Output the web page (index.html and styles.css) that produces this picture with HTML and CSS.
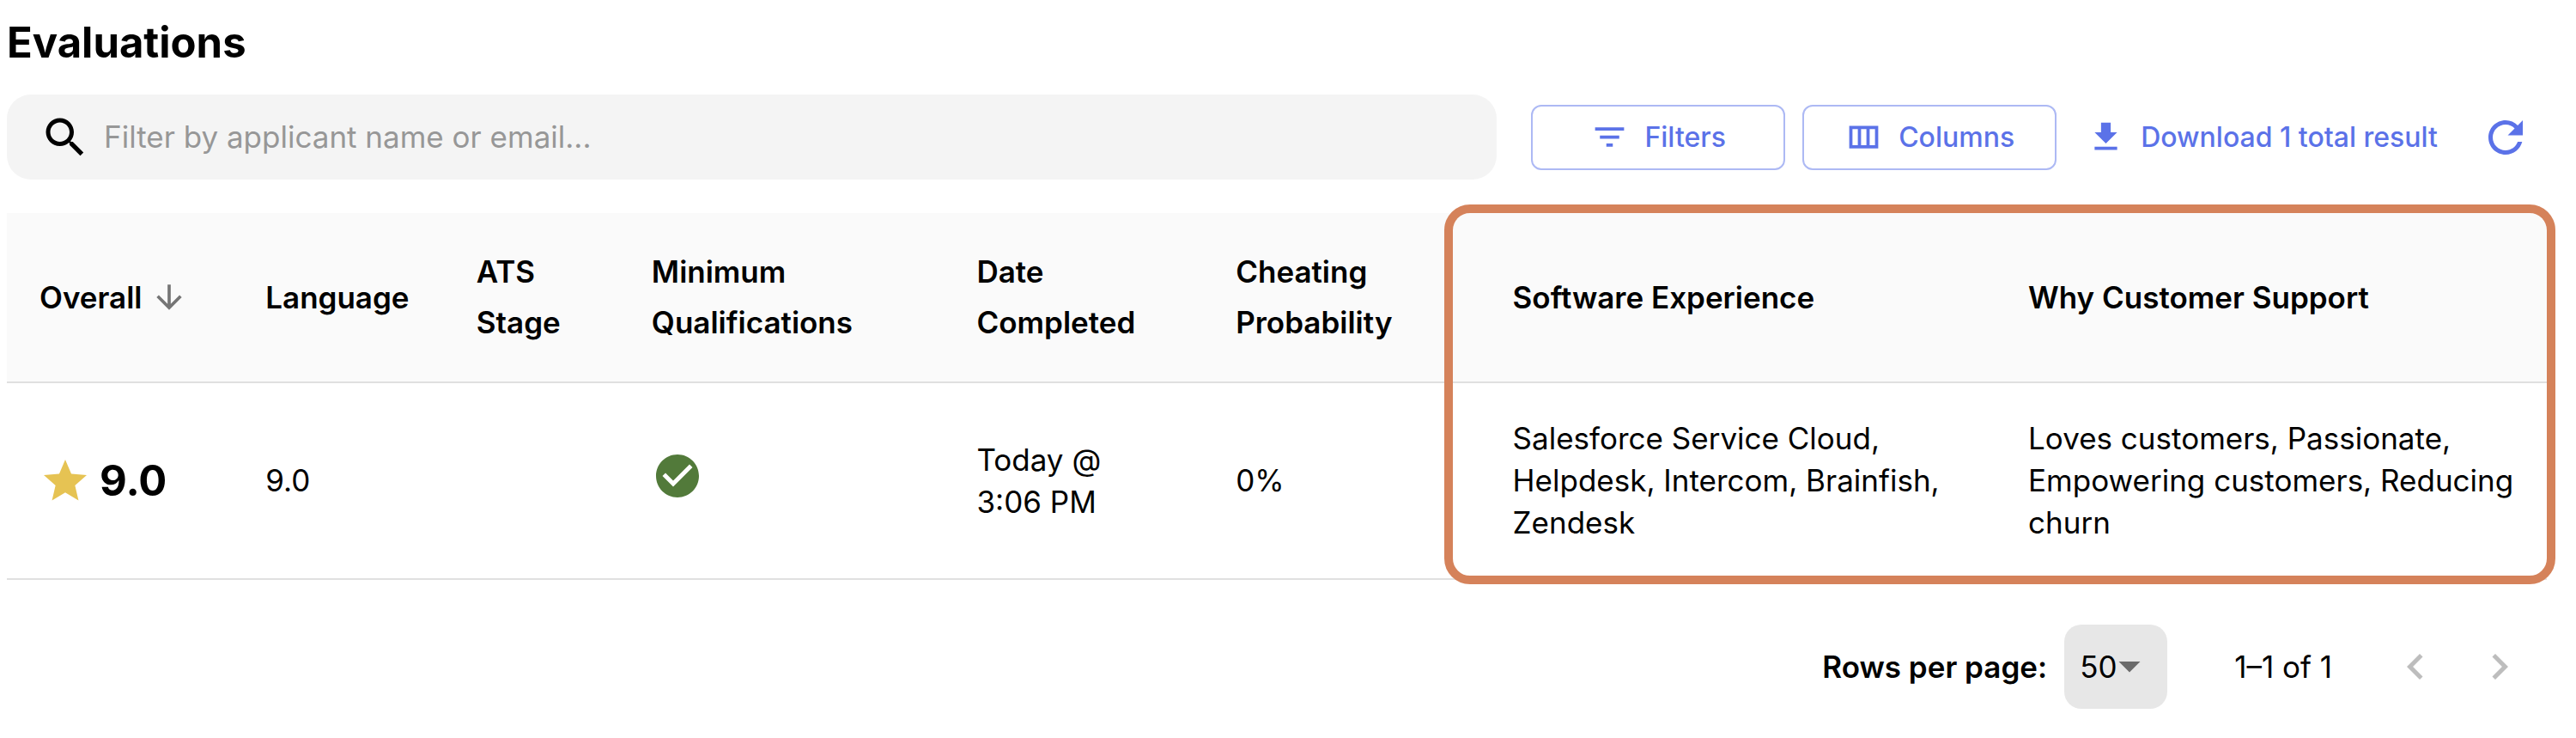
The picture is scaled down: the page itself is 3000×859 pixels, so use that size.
FILE: index.html
```html
<!DOCTYPE html>
<html lang="en">
<head>
  <meta charset="UTF-8">
  <meta name="viewport" content="width=device-width, initial-scale=1.0">
  <title>Evaluations</title>
  <link rel="stylesheet" href="styles.css">
</head>
<body>

  <main class="page">
    <h1>Evaluations</h1>

    <!-- Search and actions -->
    <div class="toolbar">
      <label class="search" for="search">
        <svg class="icon" viewBox="0 0 24 24" aria-hidden="true"><path d="M15.5 14h-.79l-.28-.27C15.41 12.59 16 11.11 16 9.5 16 5.91 13.09 3 9.5 3S3 5.91 3 9.5 5.91 16 9.5 16c1.61 0 3.09-.59 4.23-1.57l.27.28v.79l5 4.99L20.49 19l-4.99-5zm-6 0C7.01 14 5 11.99 5 9.5S7.01 5 9.5 5 14 7.01 14 9.5 11.99 14 9.5 14z"/></svg>
        <input type="text" id="search" placeholder="Filter by applicant name or email...">
      </label>

      <div class="actions">
        <button type="button" class="btn btn-outlined">
          <svg class="icon-small" viewBox="0 0 24 24" aria-hidden="true"><path d="M10 18h4v-2h-4v2zM3 6v2h18V6H3zm3 7h12v-2H6v2z"/></svg>
          Filters
        </button>
        <button type="button" class="btn btn-outlined">
          <svg class="icon-small" viewBox="0 0 24 24" aria-hidden="true"><path d="M3 5v14h18V5H3zm5.33 12H5V7h3.33v10zm5.34 0h-3.33V7h3.33v10zM19 17h-3.33V7H19v10z"/></svg>
          Columns
        </button>
        <button type="button" class="btn btn-text">
          <svg class="icon-small" viewBox="0 0 24 24" aria-hidden="true"><path d="M19 9h-4V3H9v6H5l7 7 7-7zM5 18v2h14v-2H5z"/></svg>
          Download 1 total result
        </button>
        <button type="button" class="btn-refresh" aria-label="Refresh">
          <svg class="icon" viewBox="0 0 24 24" aria-hidden="true"><path d="M17.65 6.35C16.2 4.9 14.21 4 12 4c-4.42 0-7.99 3.58-7.99 8s3.57 8 7.99 8c3.73 0 6.84-2.55 7.73-6h-2.08c-.82 2.33-3.04 4-5.65 4-3.31 0-6-2.69-6-6s2.69-6 6-6c1.66 0 3.14.69 4.22 1.78L13 11h7V4l-2.35 2.35z"/></svg>
        </button>
      </div>
    </div>

    <!-- Results table -->
    <div class="table-wrap">
      <table>
        <colgroup>
          <col class="col-overall">
          <col class="col-language">
          <col class="col-stage">
          <col class="col-qualifications">
          <col class="col-date">
          <col class="col-cheating">
          <col class="col-software">
          <col class="col-why">
        </colgroup>
        <thead>
          <tr>
            <th scope="col" aria-sort="descending">
              <button type="button" class="sort">
                Overall
                <svg class="icon-sort" viewBox="0 0 24 24" aria-hidden="true"><path d="M20 12l-1.41-1.41L13 16.17V4h-2v12.17l-5.58-5.59L4 12l8 8 8-8z"/></svg>
              </button>
            </th>
            <th scope="col">Language</th>
            <th scope="col">ATS<br>Stage</th>
            <th scope="col">Minimum<br>Qualifications</th>
            <th scope="col">Date<br>Completed</th>
            <th scope="col">Cheating<br>Probability</th>
            <th scope="col">Software Experience</th>
            <th scope="col">Why Customer Support</th>
          </tr>
        </thead>
        <tbody>
          <tr>
            <td>
              <div class="score">
                <svg class="icon star" viewBox="0 0 24 24" aria-hidden="true"><path d="M12 17.27L18.18 21l-1.64-7.03L22 9.24l-7.19-.61L12 2 9.19 8.63 2 9.24l5.46 4.73L5.82 21z"/></svg>
                9.0
              </div>
            </td>
            <td>9.0</td>
            <td></td>
            <td>
              <svg class="icon check" viewBox="0 0 24 24" role="img" aria-label="Met"><path d="M12 2C6.48 2 2 6.48 2 12s4.48 10 10 10 10-4.48 10-10S17.52 2 12 2zm-2 15l-5-5 1.41-1.41L10 14.17l7.59-7.59L19 8l-9 9z"/></svg>
            </td>
            <td>Today @<br>3:06 PM</td>
            <td>0%</td>
            <td>Salesforce Service Cloud, Helpdesk, Intercom, Brainfish, Zendesk</td>
            <td>Loves customers, Passionate, Empowering customers, Reducing churn</td>
          </tr>
        </tbody>
      </table>
      <div class="highlight"></div>
    </div>

    <!-- Pagination -->
    <div class="pagination">
      <label for="rows">Rows per page:</label>
      <div class="select">
        <select id="rows">
          <option>10</option>
          <option>25</option>
          <option selected>50</option>
        </select>
        <svg class="icon caret" viewBox="0 0 24 24" aria-hidden="true"><path d="M7 10l5 5 5-5z"/></svg>
      </div>
      <span class="range">1–1 of 1</span>
      <div class="pager">
        <button type="button" aria-label="Previous page" disabled>
          <svg class="icon" viewBox="0 0 24 24" aria-hidden="true"><path d="M15.41 7.41L14 6l-6 6 6 6 1.41-1.41L10.83 12z"/></svg>
        </button>
        <button type="button" aria-label="Next page" disabled>
          <svg class="icon" viewBox="0 0 24 24" aria-hidden="true"><path d="M10 6L8.59 7.41 13.17 12l-4.58 4.59L10 18l6-6z"/></svg>
        </button>
      </div>
    </div>
  </main>

</body>
</html>
```
FILE: styles.css
```css
* {
  box-sizing: border-box;
}

body {
  margin: 0;
  background-color: #fff;
  color: #000;
  font-family: Inter, "Liberation Sans", sans-serif;
  font-size: 35px;
  line-height: 49px;
}

button, input, select {
  margin: 0;
  padding: 0;
  border: none;
  background: none;
  color: inherit;
  font: inherit;
}

button {
  cursor: pointer;
}

svg {
  display: block;
  flex-shrink: 0;
  fill: currentColor;
}

.page {
  padding: 20px 34px 0 8px;
}

h1 {
  margin: 0 0 30px;
  font-size: 49px;
  line-height: 60px;
  font-weight: 700;
}

.icon {
  width: 60px;
  height: 60px;
}

.icon-small {
  width: 45px;
  height: 45px;
}

/* Toolbar */
.toolbar {
  display: flex;
  align-items: center;
  gap: 40px;
  margin-bottom: 39px;
}

.search {
  flex: 1;
  display: flex;
  align-items: center;
  gap: 15px;
  height: 99px;
  padding: 0 38px;
  border-radius: 28px;
  background-color: #f4f4f4;
}

.search input {
  flex: 1;
  min-width: 0;
  outline: none;
}

.search input::placeholder {
  color: #979797;
  opacity: 1;
}

.actions {
  display: flex;
  align-items: center;
  gap: 20px;
  color: #5b72e8;
}

.btn {
  display: flex;
  align-items: center;
  justify-content: center;
  gap: 18px;
  height: 76px;
  font-size: 32px;
  font-weight: 500;
  white-space: nowrap;
}

.btn-outlined {
  width: 296px;
  border: 2px solid #adb9f4;
  border-radius: 12px;
}

.btn-text {
  padding: 0 15px;
}

.btn-refresh {
  padding: 0 18px 0 14px;
}

/* Table */
.table-wrap {
  position: relative;
}

table {
  width: 100%;
  table-layout: fixed;
  border-collapse: collapse;
}

.col-overall { width: 8.9%; }
.col-language { width: 8.3%; }
.col-stage { width: 6.9%; }
.col-qualifications { width: 12.8%; }
.col-date { width: 10.2%; }
.col-cheating { width: 10.9%; }
.col-software { width: 20.3%; }
.col-why { width: 21.7%; }

th, td {
  padding: 40px 38px;
  border-bottom: 2px solid #e0e0e0;
  text-align: left;
  vertical-align: middle;
}

th {
  padding-top: 39px;
  padding-bottom: 39px;
  background-color: #fafafa;
  font-weight: 600;
  line-height: 59px;
}

th:last-child, td:last-child {
  padding-right: 20px;
}

.sort {
  display: flex;
  align-items: center;
  gap: 10px;
  white-space: nowrap;
}

.icon-sort {
  width: 44px;
  height: 44px;
  color: #757575;
}

.score {
  display: flex;
  align-items: center;
  gap: 10px;
  font-size: 49px;
  font-weight: 700;
}

.star {
  color: #e6c353;
}

.check {
  display: inline-block;
  vertical-align: baseline;
  color: #527a3a;
}

.highlight {
  position: absolute;
  top: -10px;
  right: -10px;
  bottom: -5px;
  left: 56.6%;
  border: 10px solid #d5825a;
  border-radius: 30px;
  pointer-events: none;
}

/* Pagination */
.pagination {
  display: flex;
  align-items: center;
  justify-content: flex-end;
  margin-top: 52px;
  padding-right: 6px;
}

.pagination label {
  margin-right: 20px;
  font-weight: 600;
}

.select {
  position: relative;
  margin-right: 78px;
}

.select select {
  width: 120px;
  height: 98px;
  padding-left: 18px;
  border-radius: 20px;
  background-color: #e7e7e7;
  appearance: none;
}

.caret {
  position: absolute;
  top: 18px;
  right: 14px;
  color: #6b6b6b;
  pointer-events: none;
}

.range {
  margin-right: 48px;
}

.pager {
  display: flex;
}

.pager button {
  padding: 19px;
  color: #bdbdbd;
  cursor: default;
}
```
